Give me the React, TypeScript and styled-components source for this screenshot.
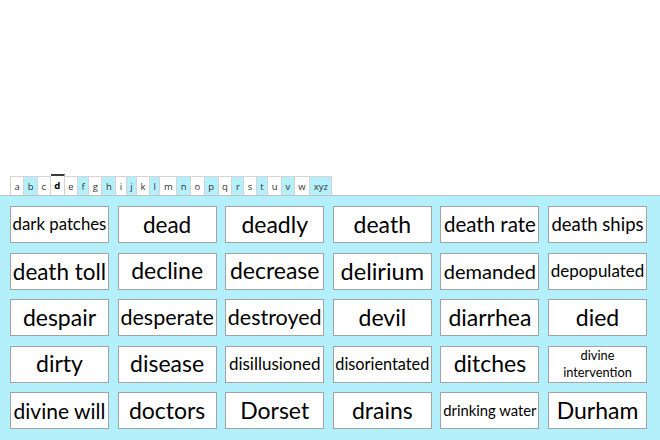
import { createGlobalStyle } from 'styled-components';
import styled from 'styled-components';

const GlobalStyle = createGlobalStyle`
  html, body {
    margin: 0;
    padding: 0;
    background: #ffffff;
  }
  body {
    font-family: 'Lato', 'Open Sans', sans-serif;
  }
`;

const CYAN = '#b3f0fb';

const Page = styled.div`
  height: 440px;
  width: 660px;
  display: flex;
  flex-direction: column;
  justify-content: flex-end;
  overflow: hidden;
`;

const TabStrip = styled.div`
  display: flex;
  align-items: flex-end;
  padding-left: 10px;
  height: 23px;
`;

const Tab = styled.div<{ $tint: boolean; $active: boolean }>`
  height: ${({ $active }) => ($active ? '21px' : '19px')};
  padding: 0 3.5px;
  display: flex;
  align-items: center;
  justify-content: center;
  font-family: 'Open Sans', sans-serif;
  font-size: 9.5px;
  font-weight: ${({ $active }) => ($active ? 700 : 400)};
  color: ${({ $active }) => ($active ? '#000' : '#333')};
  background: ${({ $tint }) => ($tint ? CYAN : '#ffffff')};
  border: 1px solid #d4d4d4;
  border-top: ${({ $active }) => ($active ? '2px solid #3a3a3a' : '1px solid #d4d4d4')};
  border-bottom: none;
  border-left: none;
  box-sizing: border-box;
  &:first-child {
    border-left: 1px solid #d4d4d4;
  }
`;

const Panel = styled.div`
  height: 245px;
  box-sizing: border-box;
  background: ${CYAN};
  border-top: 1px solid #c0c0c0;
  padding: 10px 13px 0 10px;
`;

const Grid = styled.div`
  display: grid;
  grid-template-columns: repeat(6, 1fr);
  grid-auto-rows: 37px;
  column-gap: 8.6px;
  row-gap: 9.5px;
`;

const Card = styled.div<{ $size: number }>`
  background: #ffffff;
  border: 1px solid #a3a3a3;
  box-sizing: border-box;
  display: flex;
  align-items: center;
  justify-content: center;
  text-align: center;
  font-family: 'Lato', 'Open Sans', sans-serif;
  font-size: ${({ $size }) => $size}px;
  line-height: 1.2;
  color: #000;
  white-space: nowrap;
  overflow: hidden;
`;

const Wrapped = styled.span`
  white-space: normal;
  display: block;
  width: 76px;
  line-height: 1.35;
`;

const tabs: { label: string; tint: boolean }[] = [
  { label: 'a', tint: false },
  { label: 'b', tint: true },
  { label: 'c', tint: false },
  { label: 'd', tint: false },
  { label: 'e', tint: false },
  { label: 'f', tint: true },
  { label: 'g', tint: false },
  { label: 'h', tint: true },
  { label: 'i', tint: false },
  { label: 'j', tint: true },
  { label: 'k', tint: false },
  { label: 'l', tint: true },
  { label: 'm', tint: false },
  { label: 'n', tint: true },
  { label: 'o', tint: false },
  { label: 'p', tint: true },
  { label: 'q', tint: false },
  { label: 'r', tint: true },
  { label: 's', tint: false },
  { label: 't', tint: true },
  { label: 'u', tint: false },
  { label: 'v', tint: true },
  { label: 'w', tint: false },
  { label: 'xyz', tint: true },
];

const words: { text: string; size: number; wrap?: boolean }[] = [
  { text: 'dark patches', size: 16.8 },
  { text: 'dead', size: 22.5 },
  { text: 'deadly', size: 23 },
  { text: 'death', size: 23 },
  { text: 'death rate', size: 20.5 },
  { text: 'death ships', size: 18.5 },
  { text: 'death toll', size: 22.5 },
  { text: 'decline', size: 23 },
  { text: 'decrease', size: 23 },
  { text: 'delirium', size: 23.5 },
  { text: 'demanded', size: 20 },
  { text: 'depopulated', size: 17 },
  { text: 'despair', size: 23 },
  { text: 'desperate', size: 21.5 },
  { text: 'destroyed', size: 21.5 },
  { text: 'devil', size: 23 },
  { text: 'diarrhea', size: 23 },
  { text: 'died', size: 23 },
  { text: 'dirty', size: 23 },
  { text: 'disease', size: 23 },
  { text: 'disillusioned', size: 17 },
  { text: 'disorientated', size: 16.3 },
  { text: 'ditches', size: 23 },
  { text: 'divine intervention', size: 12.8, wrap: true },
  { text: 'divine will', size: 21 },
  { text: 'doctors', size: 23 },
  { text: 'Dorset', size: 23 },
  { text: 'drains', size: 23 },
  { text: 'drinking water', size: 14.8 },
  { text: 'Durham', size: 23 },
];

export default function App() {
  return (
    <>
      <GlobalStyle />
      <Page>
        <TabStrip>
          {tabs.map((t) => (
            <Tab key={t.label} $tint={t.tint} $active={t.label === 'd'}>
              {t.label}
            </Tab>
          ))}
        </TabStrip>
        <Panel>
          <Grid>
            {words.map((w) => (
              <Card key={w.text} $size={w.size}>
                {w.wrap ? <Wrapped>{w.text}</Wrapped> : w.text}
              </Card>
            ))}
          </Grid>
        </Panel>
      </Page>
    </>
  );
}
